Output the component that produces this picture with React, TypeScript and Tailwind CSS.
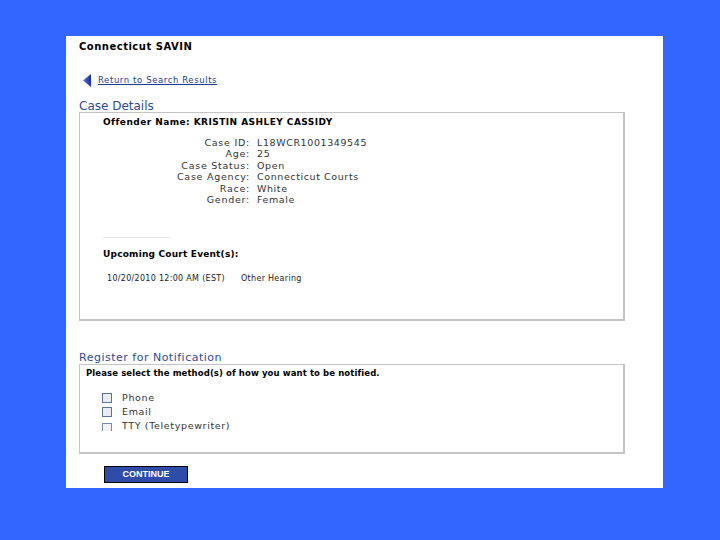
import React from "react";

const rows = [
  { label: "Case ID:", value: "L18WCR1001349545" },
  { label: "Age:", value: "25" },
  { label: "Case Status:", value: "Open" },
  { label: "Case Agency:", value: "Connecticut Courts" },
  { label: "Race:", value: "White" },
  { label: "Gender:", value: "Female" },
];

const methods = ["Phone", "Email", "TTY (Teletypewriter)"];

function BackArrow() {
  return (
    <svg width="8" height="13" viewBox="0 0 8 13" className="shrink-0">
      <defs>
        <linearGradient id="arr" x1="0" y1="0" x2="1" y2="0">
          <stop offset="0" stopColor="#5b6fe0" />
          <stop offset="1" stopColor="#1b2c9c" />
        </linearGradient>
      </defs>
      <path d="M8 0 L8 13 L0 6.5 Z" fill="url(#arr)" />
    </svg>
  );
}

export default function App() {
  return (
    <div
      className="w-[720px] h-[540px] bg-[#3366ff] pt-[36px] pl-[66px]"
      style={{ fontFamily: '"DejaVu Sans", Verdana, sans-serif' }}
    >
      <div className="w-[597px] h-[452px] bg-white pl-[13px] pt-[5px]">
        {/* header */}
        <div className="text-[10px] font-bold leading-[12px] tracking-[0.5px] text-black">Connecticut SAVIN</div>

        {/* back link */}
        <div className="mt-[20px] ml-[4px] flex items-center gap-[7px] h-[14px]">
          <BackArrow />
          <a className="text-[8.5px] leading-[12px] tracking-[0.6px] text-[#1f3a8a] underline">Return to Search Results</a>
        </div>

        {/* case details */}
        <div className="mt-[13px] text-[12px] leading-[12px] text-[#2e4c8e]">Case Details</div>
        <div className="w-[546px] h-[209px] border border-[#c4c4c4] border-r-2 border-b-2 pl-[23px] pt-[3px] text-[#333]">
          <div className="text-[9px] font-bold leading-[12px] tracking-[0.45px] text-black">
            Offender Name: KRISTIN ASHLEY CASSIDY
          </div>
          <div className="mt-[9px] grid grid-cols-[147px_1fr] gap-x-[7px] text-[9.5px] leading-[11.4px] tracking-[0.75px]">
            {rows.map((r) => (
              <React.Fragment key={r.label}>
                <div className="text-right">{r.label}</div>
                <div className="tracking-[0.6px]">{r.value}</div>
              </React.Fragment>
            ))}
          </div>
          <div className="mt-[32px] w-[67px] h-px bg-[#e4e4e4]" />
          <div className="mt-[10px] text-[9px] font-bold leading-[12px] tracking-[0.2px] text-black">
            Upcoming Court Event(s):
          </div>
          <div className="mt-[13px] ml-[4px] flex text-[8px] leading-[12px] tracking-[0.3px] text-[#222]">
            <span className="w-[134px]">10/20/2010 12:00 AM (EST)</span>
            <span>Other Hearing</span>
          </div>
        </div>

        {/* register */}
        <div className="mt-[31px] text-[11px] leading-[12px] tracking-[0.5px] text-[#2e4c8e]">
          Register for Notification
        </div>
        <div className="w-[546px] h-[90px] border border-[#c4c4c4] border-r-2 border-b-2 pl-[6px] pt-[2px]">
          <div className="text-[8.5px] font-bold leading-[12px] tracking-[0.1px] text-black">
            Please select the method(s) of how you want to be notified.
          </div>
          <div className="mt-[13px] ml-[16px] flex flex-col gap-[2px]">
            {methods.map((m, i) => (
              <label key={m} className="flex items-center gap-[10px] h-[12px]">
                <span
                  className={
                    i === 2
                      ? "w-[10px] h-[8px] self-end mb-[1px] border border-b-0 border-[#7a8aa0] bg-[#f2f4f7]"
                      : "w-[10px] h-[10px] border border-[#5c7394] bg-[#eaeef3]"
                  }
                />
                <span className="text-[9.5px] leading-[12px] tracking-[0.65px] text-[#333]">{m}</span>
              </label>
            ))}
          </div>
        </div>

        {/* continue */}
        <button
          type="button"
          className="mt-[12px] ml-[25px] w-[84px] h-[17px] bg-[#2f4ca8] border border-black text-white text-[9px] font-bold leading-[15px]"
          style={{ fontFamily: '"Liberation Sans", Arial, sans-serif' }}
        >
          CONTINUE
        </button>
      </div>
    </div>
  );
}
